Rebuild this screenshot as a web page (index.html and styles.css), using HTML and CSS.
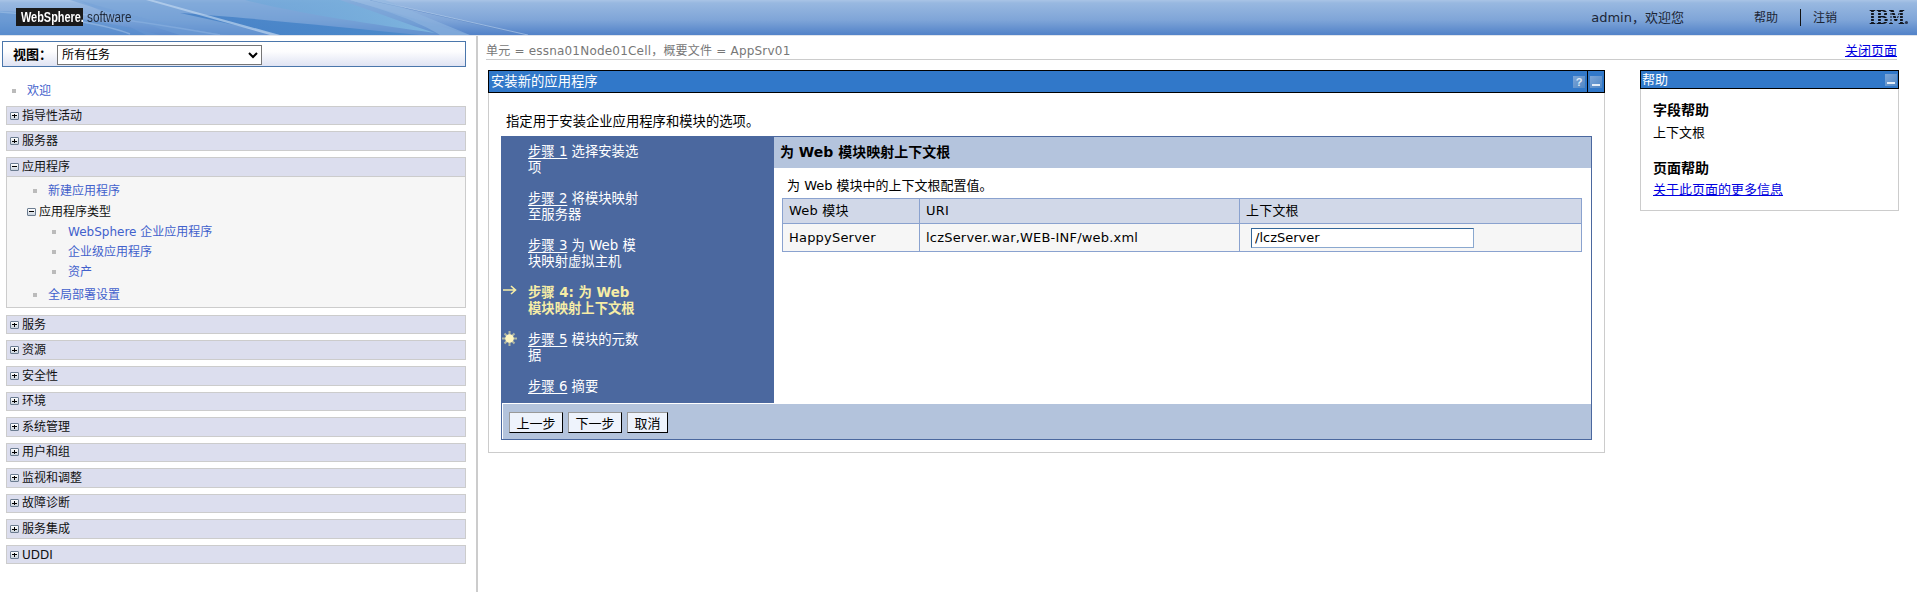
FILE: index.html
```html
<!DOCTYPE html>
<html lang="zh-CN">
<head>
<meta charset="utf-8">
<title>WebSphere 管理控制台</title>
<link rel="stylesheet" href="styles.css">
</head>
<body>
<header class="top">
  <svg class="swoosh" viewBox="0 0 640 35" width="640" height="35" aria-hidden="true">
    <defs>
      <linearGradient id="sw1" x1="0" y1="0" x2="1" y2="0">
        <stop offset="0" stop-color="#3f7cc4" stop-opacity=".75"/>
        <stop offset="1" stop-color="#4a8acb" stop-opacity=".95"/>
      </linearGradient>
      <linearGradient id="sw2" x1="0" y1="0" x2="1" y2="0">
        <stop offset="0" stop-color="#6aa6d8" stop-opacity=".5"/>
        <stop offset="1" stop-color="#7fb6df" stop-opacity=".95"/>
      </linearGradient>
    </defs>
    <path d="M70 0H350L470 35H180Z" fill="#6f9fd6" opacity=".55"/>
    <path d="M0 11C60 14 110 22 160 35H0Z" fill="#5d93d0" opacity=".6"/>
    <path d="M180 13C240 17 320 25 420 35H280Z" fill="url(#sw1)"/>
    <path d="M245 0H340C375 12 410 25 435 33C370 24 290 12 245 0Z" fill="url(#sw2)"/>
    <path d="M0 12C60 16 110 26 130 34" fill="none" stroke="#a9c8ea" stroke-width="1.5" opacity=".5"/>
    <path d="M80 14C130 20 180 28 220 35" fill="none" stroke="#a9c8ea" stroke-width="1.5" opacity=".45"/>
    <path d="M78 0C120 12 180 30 230 35L146 35C120 22 100 10 78 0Z" fill="#6f9fd6" opacity=".35"/>
    <path d="M153 0L280 35H270L146 0Z" fill="#c4daf1" opacity=".65"/>
    <path d="M370 0L526 35" fill="none" stroke="#5e88c4" stroke-width="1" opacity=".8"/>
    <path d="M372 0L528 35" fill="none" stroke="#bcd3ee" stroke-width="1" opacity=".6"/>
    <path d="M350 0H385L470 35H440C420 22 385 10 350 0Z" fill="#8fb5e0" opacity=".6"/>
  </svg>
  <div class="brand"><span class="brand-name"><span class="brand-text">WebSphere.</span></span><span class="brand-soft"><span class="brand-soft-text">software</span></span></div>
  <div class="top-right">
    <span class="user">admin，欢迎您</span>
    <a class="top-link top-help">帮助</a>
    <span class="top-div"></span>
    <a class="top-link">注销</a>
    <span class="ibm">IBM<i class="ibm-dot"></i></span>
  </div>
</header>

<div class="page">
  <nav class="nav">
    <div class="view-bar">
      <label class="view-label" for="view">视图：</label>
      <select id="view" class="view-select"><option>所有任务</option></select>
    </div>

    <div class="nav-welcome"><span class="bullet"></span><a class="nav-link">欢迎</a></div>

    <div class="cats cats-a">
      <div class="cat"><span class="tg"></span>指导性活动</div>
      <div class="cat"><span class="tg"></span>服务器</div>
    </div>

    <div class="cat-open">
      <div class="cat cat-head"><span class="tg tg-minus"></span>应用程序</div>
      <div class="cat-body">
        <div class="li li-new"><span class="bullet"></span><a class="nav-link">新建应用程序</a></div>
        <div class="li-group"><span class="tg tg-minus"></span>应用程序类型</div>
        <div class="li li-sub"><span class="bullet"></span><a class="nav-link">WebSphere 企业应用程序</a></div>
        <div class="li li-sub"><span class="bullet"></span><a class="nav-link">企业级应用程序</a></div>
        <div class="li li-sub"><span class="bullet"></span><a class="nav-link">资产</a></div>
        <div class="li li-last"><span class="bullet"></span><a class="nav-link">全局部署设置</a></div>
      </div>
    </div>

    <div class="cats cats-b">
      <div class="cat"><span class="tg"></span>服务</div>
      <div class="cat"><span class="tg"></span>资源</div>
      <div class="cat"><span class="tg"></span>安全性</div>
      <div class="cat"><span class="tg"></span>环境</div>
      <div class="cat"><span class="tg"></span>系统管理</div>
      <div class="cat"><span class="tg"></span>用户和组</div>
      <div class="cat"><span class="tg"></span>监视和调整</div>
      <div class="cat"><span class="tg"></span>故障诊断</div>
      <div class="cat"><span class="tg"></span>服务集成</div>
      <div class="cat"><span class="tg"></span>UDDI</div>
    </div>
  </nav>

  <main class="main">
    <div class="crumb">
      <span class="crumb-text">单元 = essna01Node01Cell，概要文件 = AppSrv01</span>
      <a class="close-page">关闭页面</a>
    </div>

    <div class="panels">
      <section class="panel">
        <div class="title-bar">
          <span class="title-text">安装新的应用程序</span>
          <span class="tbtn tbtn-q">?</span>
          <span class="title-sep"><span class="tbtn tbtn-min"></span></span>
        </div>
        <div class="panel-body">
          <p class="intro">指定用于安装企业应用程序和模块的选项。</p>
          <div class="wizard">
            <div class="wiz-top">
              <div class="steps">
                <p class="step"><a class="step-link">步骤 1</a> 选择安装选<br>项</p>
                <p class="step"><a class="step-link">步骤 2</a> 将模块映射<br>至服务器</p>
                <p class="step"><a class="step-link">步骤 3</a> 为 Web 模<br>块映射虚拟主机</p>
                <p class="step step-current">
                  <svg class="step-icon" width="14" height="10" viewBox="0 0 14 10" aria-hidden="true"><path d="M0 5H12M8 1L12.500 5L8 9" fill="none" stroke="#f6eda6" stroke-width="1.600"/></svg>
                  步骤 4: 为 Web<br>模块映射上下文根</p>
                <p class="step">
                  <svg class="step-icon step-sun" width="15" height="15" viewBox="0 0 15 15" aria-hidden="true"><g stroke="#f6eda6" stroke-width="2" opacity=".6"><path d="M7.500 0V15M0 7.500H15M2.500 2.500L12.500 12.500M12.500 2.500L2.500 12.500"/></g><circle cx="7.500" cy="7.500" r="4.300" fill="#fff6c0"/></svg>
                  <a class="step-link">步骤 5</a> 模块的元数<br>据</p>
                <p class="step"><a class="step-link">步骤 6</a> 摘要</p>
              </div>
              <div class="wiz-main">
                <h2 class="wiz-head">为 Web 模块映射上下文根</h2>
                <p class="wiz-desc">为 Web 模块中的上下文根配置值。</p>
                <table class="map">
                  <thead>
                    <tr><th class="c1">Web 模块</th><th class="c2">URI</th><th>上下文根</th></tr>
                  </thead>
                  <tbody>
                    <tr><td>HappyServer</td><td>lczServer.war,WEB-INF/web.xml</td><td><input class="root-input" type="text" value="/lczServer"></td></tr>
                  </tbody>
                </table>
              </div>
            </div>
            <div class="wiz-actions">
              <button class="btn" type="button">上一步</button>
              <button class="btn" type="button">下一步</button>
              <button class="btn btn-short" type="button">取消</button>
            </div>
          </div>
        </div>
      </section>

      <aside class="help">
        <div class="help-title"><span class="help-title-text">帮助</span><span class="tbtn tbtn-min"></span></div>
        <div class="help-body">
          <h3 class="help-h">字段帮助</h3>
          <p class="help-p">上下文根</p>
          <h3 class="help-h help-h2">页面帮助</h3>
          <a class="help-link">关于此页面的更多信息</a>
        </div>
      </aside>
    </div>
  </main>
</div>
</body>
</html>
```

FILE: styles.css
```css
* { box-sizing: border-box; }
html, body { margin: 0; padding: 0; height: 100%; overflow: hidden; }
body {
  background: #fff;
  color: #000;
  font: 13px/16px "DejaVu Sans", "Noto Sans CJK SC", sans-serif;
}
p, h2, h3 { margin: 0; font-weight: normal; }

/* Top banner */
.top {
  position: relative;
  display: flex;
  align-items: center;
  height: 36px;
  border-bottom: 1px solid #dfe4ec;
  background: linear-gradient(#a9c4e6 0, #98b8e0 3px, #7fa5d8 20px, #5484c9 34px, #5484c9 35px);
}
.swoosh { position: absolute; left: 0; top: 0; }
.brand { position: relative; display: flex; align-items: center; margin-left: 16px; margin-top: -1px; }
.brand-name {
  display: block; width: 67px; height: 18px; background: #1a1a1a; color: #fff;
  font: bold 14px/18px "Liberation Sans", sans-serif; padding-left: 5px; white-space: nowrap;
}
.brand-text { display: inline-block; transform: scaleX(.78); transform-origin: 0 50%; }
.brand-soft { color: #1f2a3a; font: 14px/18px "Liberation Sans", sans-serif; margin-left: 4px; width: 46px; white-space: nowrap; }
.brand-soft-text { display: inline-block; transform: scaleX(.84); transform-origin: 0 50%; }
.top-right { position: relative; display: flex; align-items: center; margin-left: auto; color: #1b2535; height: 35px; }
.user { margin-right: 70px; }
.top-link { font-size: 12px; }
.top-div { width: 1px; height: 17px; background: #111; margin: 0 12px 0 22px; }
.ibm {
  position: relative;
  width: 46px; height: 15px; margin: 0 2px 0 32px;
  font: bold 19px/15px "DejaVu Serif", serif;
  color: transparent;
  background: repeating-linear-gradient(#10141c 0, #10141c 2px, transparent 2px, transparent 3px);
  -webkit-background-clip: text;
  background-clip: text;
  transform: scaleX(.78);
  transform-origin: 0 50%;
}
.ibm-dot { position: absolute; right: -4px; bottom: 1px; width: 4px; height: 3px; border-radius: 50%; background: #2a3550; }

/* Page split */
.page { display: flex; height: 556px; }
.nav { width: 478px; flex: none; border-right: 2px solid #ccc; padding: 5px 10px 0 0; font-size: 12px; }
.main { flex: 1; min-width: 0; padding-left: 8px; }

/* Navigation */
.view-bar {
  display: flex; align-items: center; height: 26px; margin-left: 2px;
  border: 1px solid #4a76ab;
  background: linear-gradient(#fff, #fdfdfe 40%, #dfe3f3);
  padding: 2px 0 0 10px;
}
.view-label { width: 44px; font-weight: bold; font-size: 13px; }
.view-select { width: 205px; height: 20px; font: 12px "DejaVu Sans", "Noto Sans CJK SC", sans-serif; background: #fff; }
.bullet { width: 4px; height: 4px; background: #bbb; flex: none; }
.nav-link { color: #4261cc; }
.nav-welcome { display: flex; align-items: center; gap: 11px; height: 16px; margin: 16px 0 0 12px; }
.cats { margin-left: 6px; }
.cats-a { margin-top: 6.800px; }
.cats-b { margin-top: 7px; }
.cat {
  display: flex; align-items: center; height: 19.550px; margin-bottom: 6px;
  background: #dcdeee; border: 1px solid #ccc; padding-left: 3px; color: #111;
}
.tg {
  flex: none; width: 9px; height: 8px; margin-right: 3px;
  border: 1px solid #6b7c90; border-radius: 1px;
  background: linear-gradient(#fff, #c9d2dc);
  position: relative;
}
.tg::before { content: ""; position: absolute; left: 1px; right: 1px; top: 2.500px; height: 1px; background: #000; }
.tg:not(.tg-minus)::after { content: ""; position: absolute; top: 1px; bottom: 1px; left: 3px; width: 1px; background: #000; }
.cat-open { margin-left: 6px; }
.cat-head { margin: 0; height: 20px; }
.cat-body {
  height: 131px; background: #f6f6f6; border: 1px solid #ccc; border-top: 0;
  padding: 6px 0 0 26px;
}
.li { display: flex; align-items: center; gap: 11px; height: 16px; }
.li-group { display: flex; align-items: center; height: 16px; margin: 5px 0 0 -6px; color: #111; }
.li-sub { margin: 4px 0 0 19px; gap: 12px; }
.li-last { margin-top: 7px; }

/* Breadcrumb */
.crumb {
  display: flex; justify-content: space-between; align-items: flex-end;
  height: 24px; margin-right: 20px; border-bottom: 1px solid #ccc;
}
.crumb-text { color: #777; font-size: 12px; letter-spacing: .2px; }
.close-page { color: #0000e0; text-decoration: underline; text-underline-offset: 1px; }

/* Panels */
.panels { display: flex; align-items: flex-start; margin-top: 10px; margin-left: 2px; }
.panel { width: 1117px; flex: none; }
.title-bar {
  display: flex; align-items: center; height: 23px;
  background: #3178c9; border: 1px solid #000; color: #fff; padding-left: 2px;
  font-size: 13.330px;
}
.title-text { margin-right: auto; }
.tbtn {
  display: block; flex: none; width: 12px; height: 12px; position: relative;
  background: linear-gradient(135deg, #7da6d8, #4f86c4);
  color: #dfeaf6; font: bold 11px/12px "Liberation Sans", sans-serif; text-align: center;
}
.tbtn-q { margin-right: 2px; }
.tbtn-min::after { content: ""; position: absolute; left: 2px; right: 2px; bottom: 2px; height: 2px; background: #e4edf7; }
.title-sep { display: flex; align-items: center; height: 21px; border-left: 1px solid #000; padding: 0 2px; }
.panel-body { height: 360px; border: 1px solid #ccc; border-top: 0; padding: 21px 12px 0 12px; }
.intro { padding-left: 5px; height: 22px; font-size: 13.330px; }
.wizard { border: 1px solid #4b689f; height: 304px; }
.wiz-top { display: flex; height: 266px; }
.steps { width: 272px; flex: none; background: #4b689f; color: #fff; padding: 7px 0 0 26px; font-size: 13.330px; }
.step { position: relative; height: 47px; margin: 0; white-space: nowrap; }
.step-link { text-decoration: underline; text-underline-offset: 2px; }
.step-current { color: #f6eda6; font-weight: bold; }
.step-icon { position: absolute; left: -25px; top: 0; }
.step-sun { left: -26px; top: -1px; }
.wiz-main { flex: 1; min-width: 0; }
.wiz-head { height: 31px; background: #b4c4dd; font-weight: bold; font-size: 14px; line-height: 31px; padding-left: 6px; }
.wiz-desc { margin: 10px 0 0 13px; height: 20px; }
.map {
  width: 800px; margin-left: 8px; border-collapse: collapse; table-layout: fixed;
  border: 1px solid #8aa2cf; letter-spacing: .2px;
}
.map th, .map td { border: 1px solid #8aa2cf; padding: 0 0 0 6px; text-align: left; font-weight: normal; }
.map th { height: 25px; background: #d1d8e8; }
.map td { height: 28px; background: #f6f6f6; }
.c1 { width: 137px; }
.c2 { width: 320px; }
.root-input {
  display: block; width: 223px; height: 20px; margin-left: 5px; padding: 0 3px;
  border: 1px solid #8aa8cf; border-top-color: #336699; border-left-color: #336699;
  font: 13px "DejaVu Sans", sans-serif; background: #fff; color: #000; outline: 0;
}
.wiz-actions {
  display: flex; align-items: flex-start; gap: 5px; height: 36px;
  background: #b3c3dc; border: solid #fff; border-width: 1px 0 0 1px;
  padding: 8px 0 0 6px;
}
.btn {
  width: 54px; height: 21px; padding: 0;
  border: 1px solid; border-color: #999 #000 #000 #999;
  background: #eef3fc; color: #000;
  font: 13px "DejaVu Sans", "Noto Sans CJK SC", sans-serif;
}
.btn-short { width: 41px; }

/* Help */
.help { width: 259px; flex: none; margin-left: 35px; }
.help-title {
  display: flex; align-items: center; justify-content: space-between; height: 19px;
  background: #3178c9; border: 1px solid #000; color: #fff; padding: 0 1px;
}
.help-body { height: 122px; border: 1px solid #ccc; border-top: 0; padding: 12px 0 0 12px; }
.help-h { font-size: 14px; font-weight: bold; line-height: 18px; }
.help-p { margin-top: 6px; }
.help-h2 { margin-top: 18px; }
.help-link { display: block; margin-top: 5px; color: #0000e0; text-decoration: underline; text-underline-offset: 1px; }
```
